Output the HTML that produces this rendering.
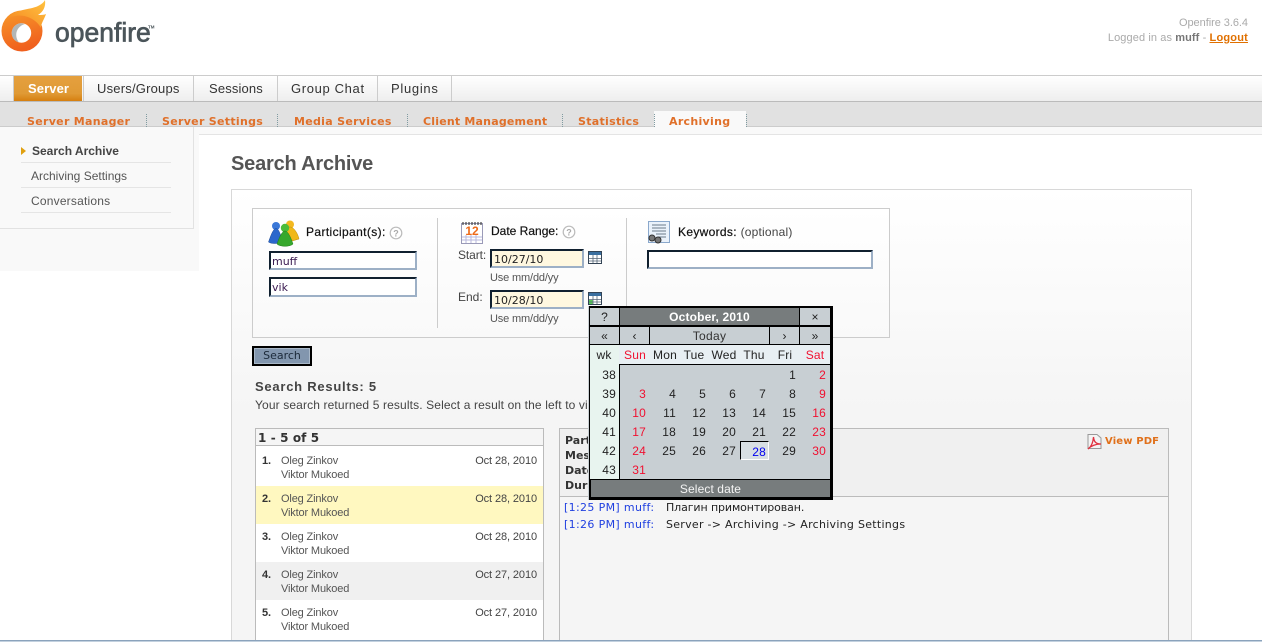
<!DOCTYPE html>
<html style="overflow:hidden;height:642px"><head><meta charset="utf-8"><title>Openfire</title>
<style>
html,body{margin:0;padding:0;background:#fff}
body{width:1262px;height:642px;position:relative;overflow:hidden;font-family:"Liberation Sans",Arial,sans-serif;font-size:12px;color:#333}
#w{position:absolute;left:0;top:0;width:1262px;height:642px;overflow:hidden}
.b{position:absolute;box-sizing:border-box}
.t{position:absolute;white-space:nowrap;line-height:16px}
.tab{font-size:13px;color:#333;top:81px}
.sub{font-family:"DejaVu Sans",sans-serif;font-weight:bold;font-size:11px;color:#e0702a;top:114px;letter-spacing:.3px}
.sep{position:absolute;top:114px;height:13px;width:0;border-left:1px dotted #7f9aa0}
.inp{position:absolute;box-sizing:border-box;border-style:solid;border-width:2px;border-color:#10202f #9db0c6 #9db0c6 #10202f;background:#fff;font-family:"DejaVu Sans",sans-serif;font-size:11px;color:#3a1a50;padding:1px 1px 0;line-height:15px}
.ln{position:absolute;left:21px;width:150px;height:1px;background:#e5e5e5}
.cell{position:absolute;background:#c8cfd3;text-align:center;font-size:12px;color:#222;line-height:18px}
.d{position:absolute;text-align:right;width:24px;font-size:12px;line-height:16px;color:#222;letter-spacing:.2px}
.h{position:absolute;width:30px;text-align:center;font-size:12px;line-height:16px;top:347px;color:#222;letter-spacing:.2px}
.d.r,.h.r{color:#f01030}
.nm{font-size:11px;color:#555;letter-spacing:-.15px}
.dt{font-size:11px;color:#444;letter-spacing:-.1px}
.rw{position:absolute;left:256px;width:287px;height:38px}
.lab{font-family:"DejaVu Sans",sans-serif;font-weight:bold;font-size:11px;color:#333;left:565px}
.chat{font-family:"DejaVu Sans",sans-serif;font-size:11px}
.st{color:#111;-webkit-text-stroke:.2px #111}
.use{font-size:11px;color:#555;letter-spacing:-.15px}
</style></head><body><div id="w">

<!-- logo -->
<svg style="position:absolute;left:0;top:0" width="170" height="56" viewBox="0 0 170 56">
<defs>
<linearGradient id="g1" x1="0" y1="0" x2="0.300" y2="1"><stop offset="0" stop-color="#f79a2a"/><stop offset="1" stop-color="#f0601e"/></linearGradient>
<linearGradient id="g2" x1="0" y1="1" x2="1" y2="0"><stop offset="0" stop-color="#f58220"/><stop offset="1" stop-color="#ffc440"/></linearGradient>
</defs>
<circle cx="22" cy="31" r="20.500" fill="url(#g1)"/>
<path d="M7 19C13 9 30 10 38 6C42 4 44 2 45 0C46 7 43 12 38 15C41 15 44 15 46 14C44 20 41 23 41 28C36 18 20 11 7 19Z" fill="url(#g2)"/>
<circle cx="21.500" cy="33" r="9.700" fill="#fff"/>
<path d="M21.500 23.300A9.700 9.700 0 0 0 19 42.400C14.500 37 15 27 25 24Z" fill="#b3b6b6"/>
<text x="55" y="41.500" font-family="Liberation Sans" font-size="26.500" fill="#4b555a" stroke="#4b555a" stroke-width=".7">openfire</text>
<text x="148" y="28.500" font-family="Liberation Sans" font-size="4.500" font-weight="bold" fill="#4b555a">TM</text>
</svg>

<div class="t" style="right:14px;top:15px;font-size:11px;color:#aaa;letter-spacing:-.05px">Openfire 3.6.4</div>
<div class="t" style="right:14px;top:30px;font-size:11px;color:#aaa;letter-spacing:.1px">Logged in as <b style="color:#777">muff</b> - <b style="color:#e07000;text-decoration:underline;letter-spacing:.2px">Logout</b></div>

<!-- main nav -->
<div class="b" style="left:0;top:75px;width:1262px;height:27px;border-top:1px solid #ccc;border-bottom:1px solid #bbb;background:linear-gradient(#fff,#eee)"></div>
<div class="b" style="left:14px;top:76px;width:68px;height:25px;background:linear-gradient(#e5a03f 0,#e09a35 70%,#d67f10 100%)"></div>
<div class="b" style="left:13px;top:76px;width:1px;height:25px;background:#ccc"></div>
<div class="b" style="left:83px;top:76px;width:1px;height:25px;background:#ccc"></div>
<div class="b" style="left:193px;top:76px;width:1px;height:25px;background:#ccc"></div>
<div class="b" style="left:277px;top:76px;width:1px;height:25px;background:#ccc"></div>
<div class="b" style="left:377px;top:76px;width:1px;height:25px;background:#ccc"></div>
<div class="b" style="left:451px;top:76px;width:1px;height:25px;background:#ccc"></div>
<div class="t tab" style="left:28px;color:#fff;font-weight:bold;letter-spacing:.1px">Server</div>
<div class="t tab" style="left:97px;letter-spacing:.2px">Users/Groups</div>
<div class="t tab" style="left:209px;letter-spacing:.15px">Sessions</div>
<div class="t tab" style="left:291px;letter-spacing:.65px">Group Chat</div>
<div class="t tab" style="left:391px;letter-spacing:.7px">Plugins</div>

<!-- sub nav -->
<div class="b" style="left:0;top:102px;width:1262px;height:25px;background:#e1e1e1;border-bottom:1px solid #ccc"></div>
<div class="b" style="left:654px;top:111px;width:92px;height:17px;background:#f9f9f9"></div>
<div class="t sub" style="left:27px">Server Manager</div>
<div class="t sub" style="left:162px">Server Settings</div>
<div class="t sub" style="left:294px">Media Services</div>
<div class="t sub" style="left:423px;letter-spacing:.2px">Client Management</div>
<div class="t sub" style="left:578px">Statistics</div>
<div class="t sub" style="left:669px">Archiving</div>
<div class="sep" style="left:146px"></div><div class="sep" style="left:277px"></div><div class="sep" style="left:407px"></div><div class="sep" style="left:562px"></div><div class="sep" style="left:654px"></div><div class="sep" style="left:746px"></div>

<!-- under nav strip -->
<div class="b" style="left:0;top:127px;width:1262px;height:8px;background:#f9f9f9;border-bottom:1px solid #e4e4e4"></div>
<div class="b" style="left:0;top:134px;width:199px;height:137px;background:#f9f9f9"></div>
<div class="b" style="left:0;top:127px;width:194px;height:102px;background:#f9f9f9;border-right:1px solid #e2e2e2;border-bottom:1px solid #e2e2e2"></div>
<div class="b" style="left:21px;top:147px;width:0;height:0;border-left:5px solid #e0a010;border-top:4px solid transparent;border-bottom:4px solid transparent"></div>
<div class="t" style="left:32px;top:143px;color:#444;font-weight:bold;font-size:12px">Search Archive</div>
<div class="t" style="left:31px;top:168px;color:#555">Archiving Settings</div>
<div class="t" style="left:31px;top:193px;color:#555;letter-spacing:.2px">Conversations</div>
<div class="ln" style="top:162px"></div><div class="ln" style="top:187px"></div><div class="ln" style="top:212px"></div>

<!-- content -->
<div class="t" style="left:231px;top:154px;font-size:20px;line-height:20px;font-weight:bold;color:#555;letter-spacing:-.2px">Search Archive</div>
<div class="b" style="left:231px;top:189px;width:961px;height:460px;border:1px solid #d8d8d8;background:linear-gradient(#fff 0,#f5f5f5 220px)"></div>

<!-- search panel -->
<div class="b" style="left:252px;top:208px;width:638px;height:130px;border:1px solid #ccc;background:linear-gradient(#fff,#f9f9f9)"></div>
<div class="b" style="left:437px;top:218px;width:1px;height:110px;background:#ccc"></div>
<div class="b" style="left:626px;top:218px;width:1px;height:90px;background:#ccc"></div>

<!-- people icon -->
<svg style="position:absolute;left:268px;top:219px" width="33" height="28" viewBox="0 0 33 28">
<circle cx="22" cy="5.500" r="4" fill="#f3b81f"/><path d="M22 8C19 8 18 12 17 18L24 22L31 20C30 15 26 8 22 8Z" fill="#f0b818" stroke="#b98a10" stroke-width=".5"/>
<circle cx="8" cy="7" r="4" fill="#3a78d8"/><path d="M8 9.500C5 10 3 16 0.500 23C3 25 10 25 14 23C13 16 11 10 8 9.500Z" fill="#2b67cc" stroke="#1a4690" stroke-width=".5"/>
<circle cx="17" cy="9" r="4.200" fill="#4cbc3a"/><path d="M17 12C14 12 11 19 9 25C12 28 22 28 25 25C23 19 20 12 17 12Z" fill="#36a82c" stroke="#1c7a18" stroke-width=".5"/>
</svg>
<div class="t st" style="left:306px;top:224px;letter-spacing:.38px">Participant(s):</div>
<svg style="position:absolute;left:389px;top:226px" width="14" height="14"><circle cx="7" cy="7" r="5.800" fill="#fff" stroke="#bbb" stroke-width="1.200"/><text x="7" y="10.500" text-anchor="middle" font-size="9" font-weight="bold" fill="#aaa" font-family="Liberation Sans">?</text></svg>
<div class="inp" style="left:269px;top:251px;width:148px;height:19px">muff</div>
<div class="inp" style="left:269px;top:277px;width:148px;height:20px">vik</div>

<!-- calendar icon -->
<svg style="position:absolute;left:460px;top:221px" width="24" height="23" viewBox="0 0 24 23">
<rect x="1.500" y="2.500" width="21" height="20" fill="#fff" stroke="#9a9ab8"/>
<path d="M2 16H22M2 19H22M6 14V22M11 14V22M16 14V22" stroke="#b8b8dc" stroke-width="1"/>
<path d="M3 1V4M6 1V4M9 1V4M12 1V4M15 1V4M18 1V4M21 1V4" stroke="#444" stroke-width="1.200"/>
<text x="12" y="14" text-anchor="middle" font-family="Liberation Sans" font-size="12" font-weight="bold" fill="#ee6a18">12</text>
</svg>
<div class="t st" style="left:491px;top:223px">Date Range:</div>
<svg style="position:absolute;left:562px;top:225px" width="14" height="14"><circle cx="7" cy="7" r="5.800" fill="#fff" stroke="#bbb" stroke-width="1.200"/><text x="7" y="10.500" text-anchor="middle" font-size="9" font-weight="bold" fill="#aaa" font-family="Liberation Sans">?</text></svg>
<div class="t" style="left:458px;top:247px;color:#444;letter-spacing:-.1px">Start:</div>
<div class="inp" style="left:490px;top:249px;width:94px;height:19px;background:#fff8e0;padding-left:2px;color:#222">10/27/10</div>
<svg style="position:absolute;left:588px;top:251px" width="14" height="13"><rect x=".5" y=".5" width="13" height="12" fill="#fff" stroke="#345"/><rect x="1" y="1" width="12" height="3" fill="#3a6f9f"/><path d="M1 7.500H13M1 10H13M5 4V12M9 4V12" stroke="#567" stroke-width=".8"/></svg>
<div class="t use" style="left:490px;top:270px">Use mm/dd/yy</div>
<div class="t" style="left:458px;top:289px;color:#444">End:</div>
<div class="inp" style="left:490px;top:290px;width:94px;height:19px;background:#fff8e0;padding-left:2px;color:#222">10/28/10</div>
<svg style="position:absolute;left:588px;top:292px" width="14" height="13"><rect x=".5" y=".5" width="13" height="12" fill="#fff" stroke="#345"/><rect x="1" y="1" width="12" height="3" fill="#3a6f9f"/><rect x="1" y="8" width="3.500" height="4" fill="#5c5"/><path d="M1 7.500H13M1 10H13M5 4V12M9 4V12" stroke="#567" stroke-width=".8"/></svg>
<div class="t use" style="left:490px;top:311px">Use mm/dd/yy</div>

<!-- keywords -->
<svg style="position:absolute;left:647px;top:221px" width="24" height="24" viewBox="0 0 24 24">
<rect x="1.500" y="0.500" width="21" height="21" fill="#eaf2fb" stroke="#8aa8cc"/>
<path d="M5 4H19M5 7H19M5 10H19M9 13H19M11 16H19" stroke="#6a7a8a" stroke-width="1"/>
<circle cx="5" cy="17" r="3" fill="#777" stroke="#333"/><circle cx="11" cy="19" r="3" fill="#777" stroke="#333"/>
</svg>
<div class="t" style="left:678px;top:224px;letter-spacing:.32px"><span class="st">Keywords:</span> <span style="color:#444;letter-spacing:.2px">(optional)</span></div>
<div class="inp" style="left:647px;top:250px;width:226px;height:19px"></div>

<div class="b" style="left:252px;top:346px;width:60px;height:20px;background:#8296ae;border:2px solid #000;text-align:center;line-height:15px;font-family:'DejaVu Sans',sans-serif;font-size:11px;color:#1c2a3a;box-shadow:inset -1px -1px 0 #a9b8c8,inset 1px 1px 0 #a9b8c8">Search</div>

<!-- results -->
<div class="t" style="left:255px;top:379px;font-size:13px;font-weight:bold;color:#444;letter-spacing:.75px">Search Results: 5</div>
<div class="t" style="left:255px;top:397px;color:#444;letter-spacing:.13px">Your search returned 5 results. Select a result on the left to view the chat conversation.</div>

<div class="b" style="left:255px;top:428px;width:289px;height:214px;border:1px solid #bbb;background:#fff"></div>
<div class="b" style="left:256px;top:429px;width:287px;height:17px;background:#f5f5f5;border-bottom:1px solid #bbb"></div>
<div class="t" style="left:258px;top:430px;font-family:'DejaVu Sans',sans-serif;font-weight:bold;font-size:12px;color:#333;letter-spacing:.1px">1 - 5 of 5</div>

<div class="rw" style="top:486px;background:#fff8c0"></div>
<div class="rw" style="top:562px;background:#f0f0f0"></div>

<div class="t nm" style="left:262px;top:453px;font-weight:bold;color:#333">1.</div><div class="t nm" style="left:281px;top:453px">Oleg Zinkov</div><div class="t nm" style="left:281px;top:467px">Viktor Mukoed</div><div class="t dt" style="right:725px;top:453px">Oct 28, 2010</div>
<div class="t nm" style="left:262px;top:491px;font-weight:bold;color:#333">2.</div><div class="t nm" style="left:281px;top:491px">Oleg Zinkov</div><div class="t nm" style="left:281px;top:505px">Viktor Mukoed</div><div class="t dt" style="right:725px;top:491px">Oct 28, 2010</div>
<div class="t nm" style="left:262px;top:529px;font-weight:bold;color:#333">3.</div><div class="t nm" style="left:281px;top:529px">Oleg Zinkov</div><div class="t nm" style="left:281px;top:543px">Viktor Mukoed</div><div class="t dt" style="right:725px;top:529px">Oct 28, 2010</div>
<div class="t nm" style="left:262px;top:567px;font-weight:bold;color:#333">4.</div><div class="t nm" style="left:281px;top:567px">Oleg Zinkov</div><div class="t nm" style="left:281px;top:581px">Viktor Mukoed</div><div class="t dt" style="right:725px;top:567px">Oct 27, 2010</div>
<div class="t nm" style="left:262px;top:605px;font-weight:bold;color:#333">5.</div><div class="t nm" style="left:281px;top:605px">Oleg Zinkov</div><div class="t nm" style="left:281px;top:619px">Viktor Mukoed</div><div class="t dt" style="right:725px;top:605px">Oct 27, 2010</div>

<!-- detail panel -->
<div class="b" style="left:559px;top:428px;width:610px;height:214px;border:1px solid #bbb;background:#f5f5f5"></div>
<div class="b" style="left:560px;top:429px;width:608px;height:68px;background:#f0f0f0;border-bottom:1px solid #bbb"></div>
<div class="t lab" style="top:433px">Participants:</div>
<div class="t lab" style="top:448px">Messages:</div>
<div class="t lab" style="top:463px">Date:</div>
<div class="t lab" style="top:478px">Duration:</div>
<svg style="position:absolute;left:1087px;top:434px" width="15" height="16" viewBox="0 0 15 16"><path d="M1 .5H10L14 4V14.500H1Z" fill="#f4f4f4" stroke="#999"/><path d="M1 15C4 13 6 9 6.500 3C7 8 9 10 14 10C10 10 5 11 1 15Z" fill="none" stroke="#e03040" stroke-width="1.300"/></svg>
<div class="t" style="left:1105px;top:434px;font-family:'DejaVu Sans',sans-serif;font-weight:bold;font-size:10px;color:#e0701a;letter-spacing:.15px">View PDF</div>
<div class="t chat" style="left:564px;top:500px;color:#2040e0;letter-spacing:.35px">[1:25 PM] muff:</div>
<div class="t chat" style="left:666px;top:500px;color:#222;letter-spacing:-.1px">Плагин примонтирован.</div>
<div class="t chat" style="left:564px;top:517px;color:#2040e0;letter-spacing:.35px">[1:26 PM] muff:</div>
<div class="t chat" style="left:666px;top:517px;color:#222;letter-spacing:.28px">Server -&gt; Archiving -&gt; Archiving Settings</div>

<!-- calendar popup -->
<div class="b" style="left:588px;top:306px;width:245px;height:194px;background:#000;border-left:1px solid #c8cfd3"></div>
<div class="b" style="left:589px;top:307px;width:241px;height:190px;background:#000"></div>
<div class="cell" style="left:590px;top:308px;width:29px;height:17px">?</div>
<div class="cell" style="left:620px;top:308px;width:179px;height:17px;background:#777c7d;color:#fff;font-weight:bold;letter-spacing:.15px">October, 2010</div>
<div class="cell" style="left:800px;top:308px;width:30px;height:17px">×</div>
<div class="cell" style="left:590px;top:327px;width:29px;height:17px">«</div>
<div class="cell" style="left:620px;top:327px;width:29px;height:17px">‹</div>
<div class="cell" style="left:650px;top:327px;width:119px;height:17px;letter-spacing:.3px;color:#333">Today</div>
<div class="cell" style="left:770px;top:327px;width:29px;height:17px">›</div>
<div class="cell" style="left:800px;top:327px;width:30px;height:17px">»</div>
<div class="b" style="left:590px;top:345px;width:240px;height:19px;background:#e8eff3"></div>
<div class="b" style="left:590px;top:345px;width:29px;height:134px;background:#e8f4ef"></div>
<div class="b" style="left:620px;top:365px;width:210px;height:114px;background:#c8cfd3"></div>
<div class="h" style="left:589px">wk</div>
<div class="h r" style="left:620px">Sun</div><div class="h" style="left:650px">Mon</div><div class="h" style="left:679px">Tue</div><div class="h" style="left:709px">Wed</div><div class="h" style="left:739px">Thu</div><div class="h" style="left:770px">Fri</div><div class="h r" style="left:800px">Sat</div>

<div class="d" style="left:592px;top:367px">38</div>
<div class="d" style="left:772px;top:367px">1</div><div class="d r" style="left:802px;top:367px">2</div>

<div class="d" style="left:592px;top:386px">39</div>
<div class="d r" style="left:622px;top:386px">3</div><div class="d" style="left:652px;top:386px">4</div><div class="d" style="left:682px;top:386px">5</div><div class="d" style="left:712px;top:386px">6</div><div class="d" style="left:742px;top:386px">7</div><div class="d" style="left:772px;top:386px">8</div><div class="d r" style="left:802px;top:386px">9</div>

<div class="d" style="left:592px;top:405px">40</div>
<div class="d r" style="left:622px;top:405px">10</div><div class="d" style="left:652px;top:405px">11</div><div class="d" style="left:682px;top:405px">12</div><div class="d" style="left:712px;top:405px">13</div><div class="d" style="left:742px;top:405px">14</div><div class="d" style="left:772px;top:405px">15</div><div class="d r" style="left:802px;top:405px">16</div>

<div class="d" style="left:592px;top:424px">41</div>
<div class="d r" style="left:622px;top:424px">17</div><div class="d" style="left:652px;top:424px">18</div><div class="d" style="left:682px;top:424px">19</div><div class="d" style="left:712px;top:424px">20</div><div class="d" style="left:742px;top:424px">21</div><div class="d" style="left:772px;top:424px">22</div><div class="d r" style="left:802px;top:424px">23</div>

<div class="b" style="left:740px;top:441px;width:29px;height:19px;background:#d8dfe3;border:1px solid;border-color:#000 #fff #fff #000"></div>
<div class="d" style="left:592px;top:443px">42</div>
<div class="d r" style="left:622px;top:443px">24</div><div class="d" style="left:652px;top:443px">25</div><div class="d" style="left:682px;top:443px">26</div><div class="d" style="left:712px;top:443px">27</div><div class="d" style="left:742px;top:444px;color:#0000f0">28</div><div class="d" style="left:772px;top:443px">29</div><div class="d r" style="left:802px;top:443px">30</div>

<div class="d" style="left:592px;top:462px">43</div>
<div class="d r" style="left:622px;top:462px">31</div>

<div class="b" style="left:591px;top:480px;width:239px;height:17px;background:#777c7d;color:#f4f4f4;text-align:center;font-size:12px;line-height:18px;letter-spacing:.1px">Select date</div>

<!-- bottom line -->
<div class="b" style="left:0;top:640px;width:1262px;height:1px;background:#8ba3bc"></div>
<div class="b" style="left:0;top:641px;width:1262px;height:1px;background:#c3d1df"></div>
</div></body></html>
